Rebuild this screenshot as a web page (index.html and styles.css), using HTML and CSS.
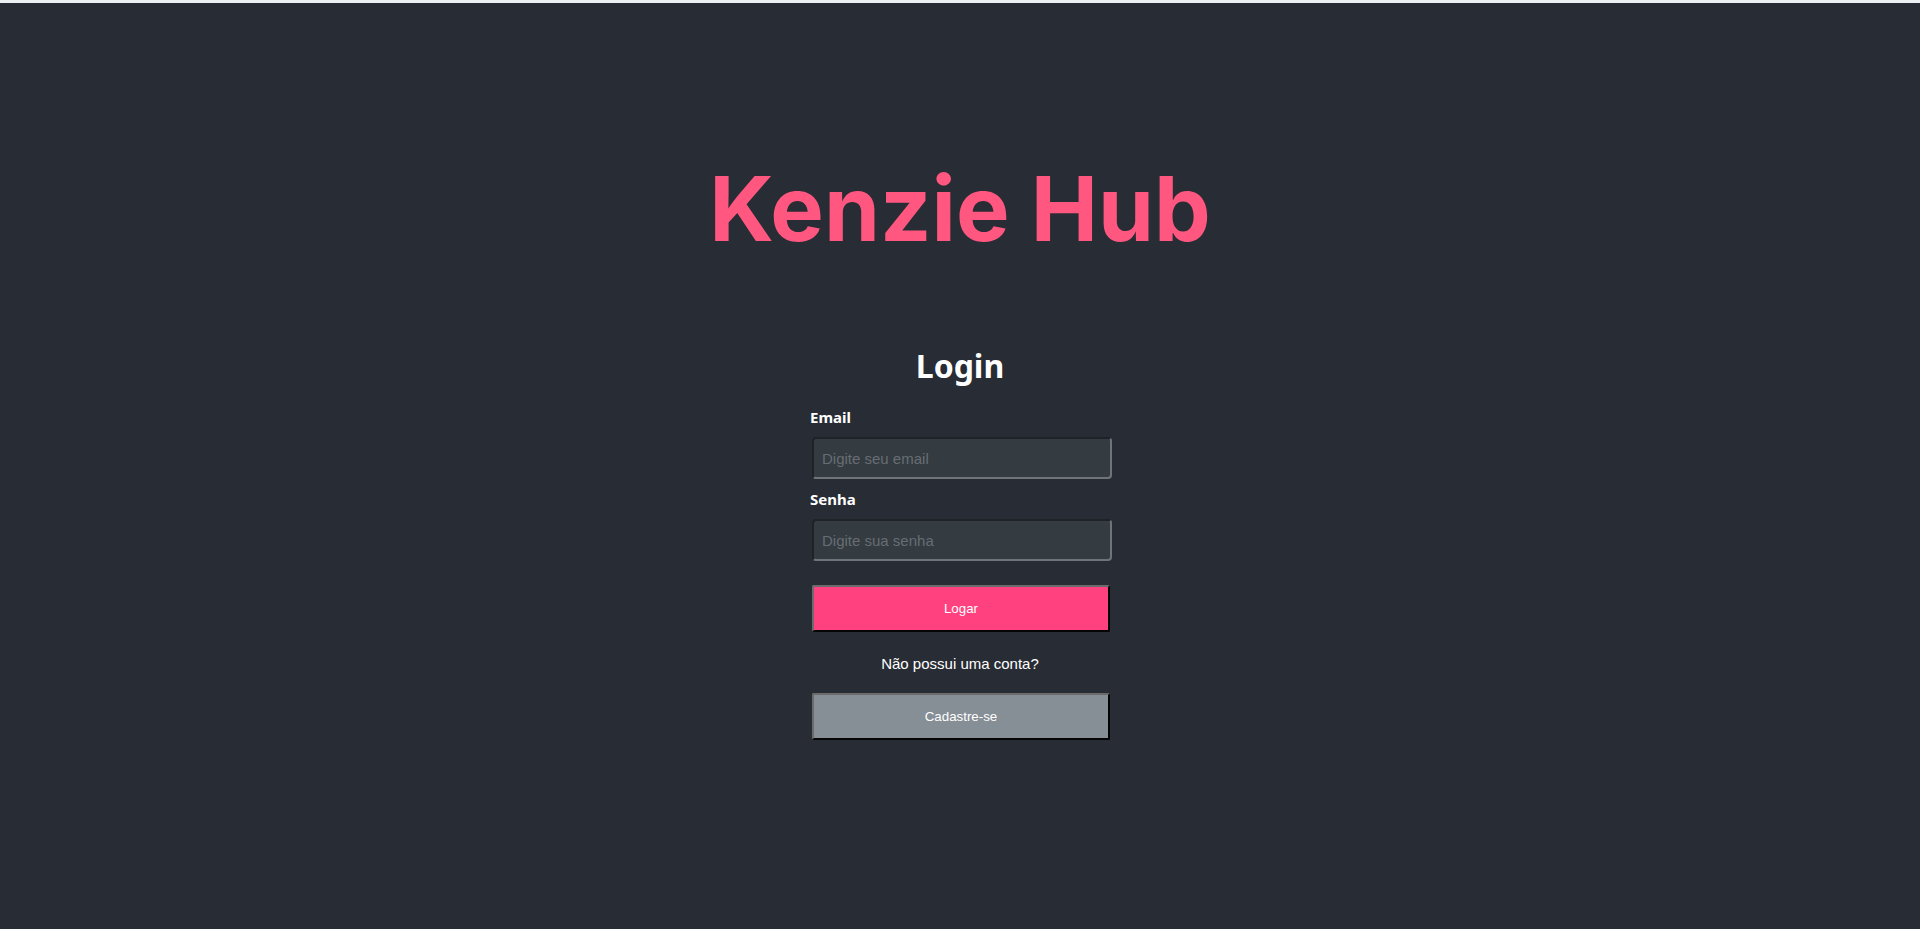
FILE: index.html
```html
<!DOCTYPE html>
<html lang="pt-BR">
<head>
<meta charset="utf-8">
<title>Kenzie Hub</title>
<link rel="stylesheet" href="styles.css">
</head>
<body>
<main class="page">
  <h1 class="brand">Kenzie Hub</h1>
  <form class="login">
    <h2 class="login-title">Login</h2>
    <label class="field-label" for="email">Email</label>
    <input class="field-input" id="email" type="email" placeholder="Digite seu email">
    <label class="field-label" for="senha">Senha</label>
    <input class="field-input" id="senha" type="password" placeholder="Digite sua senha">
    <button class="btn btn-primary" type="button">Logar</button>
    <p class="hint">Não possui uma conta?</p>
    <button class="btn btn-grey" type="button">Cadastre-se</button>
  </form>
</main>
</body>
</html>
```

FILE: styles.css
```css
html, body {
  margin: 0;
  padding: 0;
}
body {
  background: #282c34;
  border-top: 3px solid #eff0f3;
  min-height: 926px;
  font-family: "Liberation Sans", Arial, sans-serif;
}
.page {
  display: flex;
  flex-direction: column;
  align-items: center;
}
.brand {
  margin: 151px 0 0;
  font-family: Inter, "Noto Sans", sans-serif;
  font-weight: 700;
  font-size: 90px;
  line-height: normal;
  color: #ff577f;
}
.login {
  width: 300px;
  margin-top: 81px;
  display: flex;
  flex-direction: column;
}
.login-title {
  margin: 0 0 19px;
  text-align: center;
  font-family: "Noto Sans", "Open Sans", sans-serif;
  font-weight: 700;
  font-size: 32px;
  line-height: normal;
  color: #ffffff;
}
.field-label {
  font-family: "Noto Sans", "Open Sans", sans-serif;
  font-weight: 700;
  font-size: 15px;
  line-height: 22px;
  color: #ffffff;
  margin-bottom: 9px;
}
.field-input {
  box-sizing: border-box;
  height: 42px;
  width: 100%;
  margin: 0 0 9px 2px;
  padding: 0 8px;
  background: #343b41;
  border: 2px solid;
  border-color: #1f2328 #6f747a #6f747a #1f2328;
  border-radius: 4px;
  font-family: "Liberation Sans", Arial, sans-serif;
  font-size: 15px;
  color: #f8f9fa;
  outline: none;
}
.field-input::placeholder {
  color: #676d73;
}
#senha {
  margin-bottom: 24px;
}
.btn {
  box-sizing: border-box;
  width: 298px;
  height: 47px;
  margin-left: 2px;
  border: 2px solid;
  border-color: #6b6b6b #050505 #050505 #6b6b6b;
  border-radius: 2px;
  font-family: "Liberation Sans", Arial, sans-serif;
  font-size: 13.333px;
  color: #ffffff;
  cursor: pointer;
}
.btn-primary {
  background: #ff427f;
}
.btn-grey {
  background: #868e96;
}
.hint {
  margin: 23px 0 21px;
  text-align: center;
  font-size: 15px;
  line-height: normal;
  color: #ffffff;
}
```
